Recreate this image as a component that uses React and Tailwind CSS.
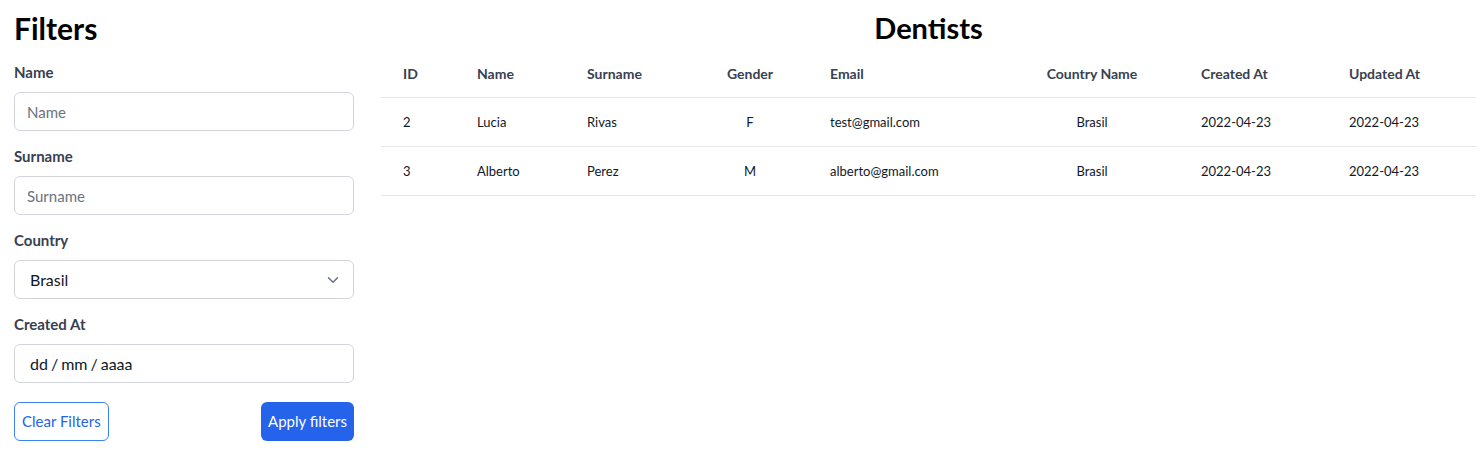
import { useState } from "react";

const dentists = [
  { id: 2, name: "Lucia", surname: "Rivas", gender: "F", email: "test@gmail.com", country: "Brasil", created: "2022-04-23", updated: "2022-04-23" },
  { id: 3, name: "Alberto", surname: "Perez", gender: "M", email: "alberto@gmail.com", country: "Brasil", created: "2022-04-23", updated: "2022-04-23" },
];

function Field({ label, children }) {
  return (
    <div className="mb-[15px]">
      <label className="block text-[15px] font-bold text-[#374151] leading-5 mb-[10px]">{label}</label>
      {children}
    </div>
  );
}

function ChevronDown() {
  return (
    <svg width="12" height="8" viewBox="0 0 12 8" fill="none" className="text-gray-500">
      <path d="M1.5 1.75L6 6.25L10.5 1.75" stroke="currentColor" strokeWidth="1.5" strokeLinecap="round" strokeLinejoin="round" />
    </svg>
  );
}

export default function App() {
  const [name, setName] = useState("");
  const [surname, setSurname] = useState("");

  return (
    <div className="flex pt-[10px] pl-[14px] pr-[4px] bg-white min-h-[475px]" style={{ fontFamily: 'Lato, sans-serif' }}>
      <div className="w-[340px] shrink-0">
        <h1 className="text-3xl font-bold text-black leading-9 mb-4">Filters</h1>

        <Field label="Name">
          <input
            value={name}
            onChange={(e) => setName(e.target.value)}
            placeholder="Name"
            className="w-full h-[39px] px-3 rounded-md border border-[#d1d5db] text-[15px] text-gray-900 placeholder:text-[#6b7280] outline-none"
          />
        </Field>
        <Field label="Surname">
          <input
            value={surname}
            onChange={(e) => setSurname(e.target.value)}
            placeholder="Surname"
            className="w-full h-[39px] px-3 rounded-md border border-[#d1d5db] text-[15px] text-gray-900 placeholder:text-[#6b7280] outline-none"
          />
        </Field>
        <Field label="Country">
          <div className="w-full h-[39px] pl-[15px] pr-[14px] rounded-md border border-[#d1d5db] flex items-center justify-between text-base text-gray-900">
            <span>Brasil</span>
            <ChevronDown />
          </div>
        </Field>
        <Field label="Created At">
          <div className="w-full h-[39px] px-[15px] rounded-md border border-[#d1d5db] flex items-center gap-[3px] text-base text-gray-900">
            <span>dd</span>
            <span>/</span>
            <span>mm</span>
            <span>/</span>
            <span>aaaa</span>
          </div>
        </Field>

        <div className="flex justify-between mt-[19px]">
          <button className="h-[39px] px-[7px] rounded-md border border-[#3b82f6] text-[#2563eb] text-[15px] bg-white">
            Clear Filters
          </button>
          <button className="h-[39px] px-[7px] rounded-md bg-[#2563eb] text-white text-[15px]">
            Apply filters
          </button>
        </div>
      </div>

      <div className="flex-1 ml-[27px]">
        <h1 className="text-[29px] font-bold text-black leading-9 text-center mb-1">Dentists</h1>
        <table className="w-full table-fixed border-collapse text-[13px]">
          <colgroup>
            <col className="w-[74px]" />
            <col className="w-[110px]" />
            <col className="w-[127px]" />
            <col className="w-[116px]" />
            <col className="w-[197px]" />
            <col className="w-[174px]" />
            <col className="w-[148px]" />
            <col className="w-[149px]" />
          </colgroup>
          <thead>
            <tr className="h-[47px] border-b border-[#e5e7eb] text-[#374151] text-[14px] font-bold">
              <th className="px-[22px] text-left">ID</th>
              <th className="px-[22px] text-left">Name</th>
              <th className="px-[22px] text-left">Surname</th>
              <th className="px-[22px] text-center">Gender</th>
              <th className="px-[22px] text-left">Email</th>
              <th className="px-[22px] text-center">Country Name</th>
              <th className="px-[22px] text-left">Created At</th>
              <th className="px-[22px] text-left">Updated At</th>
            </tr>
          </thead>
          <tbody className="text-[#111827]">
            {dentists.map((d) => (
              <tr key={d.id} className="h-[49px] border-b border-[#e5e7eb]">
                <td className="px-[22px] pt-[2px]">{d.id}</td>
                <td className="px-[22px] pt-[2px]">{d.name}</td>
                <td className="px-[22px] pt-[2px]">{d.surname}</td>
                <td className="px-[22px] pt-[2px] text-center">{d.gender}</td>
                <td className="px-[22px] pt-[2px]">{d.email}</td>
                <td className="px-[22px] pt-[2px] text-center">{d.country}</td>
                <td className="px-[22px] pt-[2px]">{d.created}</td>
                <td className="px-[22px] pt-[2px]">{d.updated}</td>
              </tr>
            ))}
          </tbody>
        </table>
      </div>
    </div>
  );
}
